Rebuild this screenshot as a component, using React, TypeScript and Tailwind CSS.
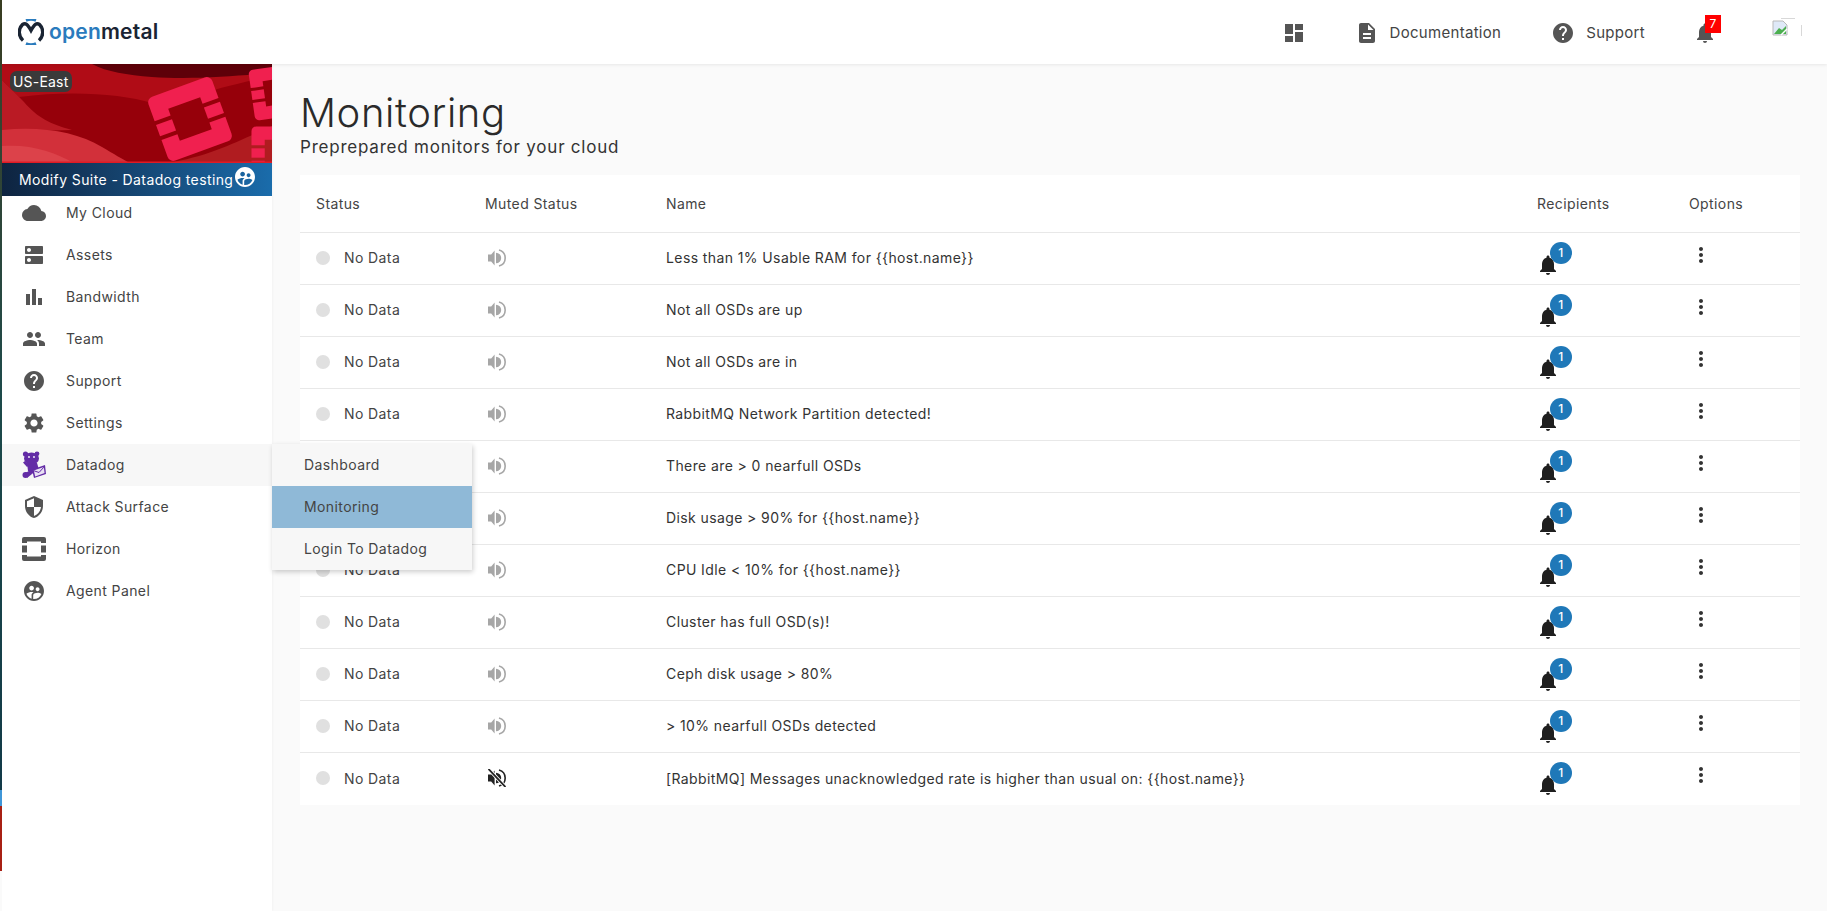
import {
  MdCloud,
  MdDns,
  MdBarChart,
  MdPeople,
  MdHelp,
  MdSettings,
  MdSecurity,
  MdSupervisedUserCircle,
  MdDashboard,
  MdDescription,
  MdNotifications,
  MdMoreVert,
} from 'react-icons/md';

const navItems = [
  { label: 'My Cloud', icon: <MdCloud size={24} /> },
  { label: 'Assets', icon: <MdDns size={24} /> },
  { label: 'Bandwidth', icon: <MdBarChart size={24} /> },
  { label: 'Team', icon: <MdPeople size={24} /> },
  { label: 'Support', icon: <MdHelp size={24} /> },
  { label: 'Settings', icon: <MdSettings size={24} /> },
];

const monitors = [
  'Less than 1% Usable RAM for {{host.name}}',
  'Not all OSDs are up',
  'Not all OSDs are in',
  'RabbitMQ Network Partition detected!',
  'There are > 0 nearfull OSDs',
  'Disk usage > 90% for {{host.name}}',
  'CPU Idle < 10% for {{host.name}}',
  'Cluster has full OSD(s)!',
  'Ceph disk usage > 80%',
  '> 10% nearfull OSDs detected',
  '[RabbitMQ] Messages unacknowledged rate is higher than usual on: {{host.name}}',
];

function OpenStackMark({ fill = '#f0204f' }: { fill?: string }) {
  // outer 68x68 centered on 0,0
  return (
    <g fill={fill}>
      <path d="M-34 -10V-28a6 6 0 0 1 6-6H28a6 6 0 0 1 6 6V-10H17V-17H-17V-10Z" />
      <path d="M-34 10V28a6 6 0 0 0 6 6H28a6 6 0 0 0 6-6V10H17V17H-17V10Z" />
      <rect x="-34" y="-6" width="17" height="12" />
      <rect x="17" y="-6" width="17" height="12" />
    </g>
  );
}

function Banner() {
  return (
    <svg viewBox="0 0 270 99" className="block h-[99px] w-[270px]" preserveAspectRatio="none">
      <rect width="270" height="99" fill="#96000a" />
      <path d="M0 0H270V12C210 24 170 40 150 39C120 30 70 26 17 33C10 26 4 20 0 16Z" fill="#b00c16" />
      <path d="M90 0H270V9C235 12 190 16 150 13C125 11 105 8 90 0Z" fill="#5e0009" />
      <path d="M0 16C8 24 14 30 22 38C36 54 48 60 70 66L0 68Z" fill="#ba1a24" />
      <path d="M0 66C40 62 75 68 100 83C112 90 120 95 128 99H0Z" fill="#d2303a" />
      <path d="M0 82C30 80 52 88 72 99H0Z" fill="#dc424a" />
      <path d="M165 99C210 92 240 75 270 62V99Z" fill="#b01c20" />
      <g transform="translate(188 55) rotate(-20)">
        <OpenStackMark />
      </g>
      <g transform="translate(275 28) rotate(-8) scale(0.75)">
        <OpenStackMark />
      </g>
      <g transform="translate(276 89) scale(0.78)">
        <OpenStackMark />
      </g>
      <rect y="97.5" width="270" height="1.5" fill="#e01b24" />
    </svg>
  );
}

function Logo() {
  return (
    <svg viewBox="0 0 26 26" className="h-[26px] w-[26px]" fill="none">
      <path d="M8 1.5a12.5 12.5 0 0 1 10 0" stroke="#2a7bbd" strokeWidth="2.6" />
      <path d="M8 24.5a12.5 12.5 0 0 0 10 0" stroke="#2a7bbd" strokeWidth="2.6" />
      <path d="M5 21.5A11 11 0 0 1 4.5 5.5C7.5 3.5 9.5 5 13 11.5C16.5 5 18.5 3.5 21.5 5.5A11 11 0 0 1 21 21.5" stroke="#1a2433" strokeWidth="3.4" />
    </svg>
  );
}

function DatadogIcon() {
  return (
    <svg viewBox="0 0 24 28" className="h-[28px] w-[24px]" fill="#632ca6">
      <circle cx="3.5" cy="3" r="2.6" />
      <circle cx="15" cy="2.8" r="2.4" />
      <ellipse cx="9.5" cy="7.5" rx="7.5" ry="6" />
      <path d="M5 12H15L16.5 17L10 23L6 20Z" />
      <path d="M5 16L1 11.5L3 10L7.5 14Z" />
      <circle cx="3.5" cy="24" r="3" />
      <path d="M3 22L9 19L10 23L5 27Z" />
      <path d="M10 18.5L23 14L24 23L12 27Z" />
      <path d="M11.8 19.5L21.8 16L22.6 22L13.2 25.4Z" fill="#e9e0f4" />
      <path d="M12 19.8L17 21.5L21.8 16.2" fill="none" stroke="#632ca6" strokeWidth="1" />
      <circle cx="7" cy="6" r="0.9" fill="#ffffff" />
      <circle cx="12" cy="6" r="0.9" fill="#ffffff" />
    </svg>
  );
}

function HorizonIcon() {
  return (
    <svg viewBox="0 0 24 24" className="h-[24px] w-[24px]" fill="#555555">
      <path d="M0 6V2a2 2 0 0 1 2-2H22a2 2 0 0 1 2 2V6H19V4.5H5V6Z" />
      <path d="M0 18V22a2 2 0 0 0 2 2H22a2 2 0 0 0 2-2V18H19V19.5H5V18Z" />
      <rect x="0" y="8.5" width="5" height="7" />
      <rect x="19" y="8.5" width="5" height="7" />
    </svg>
  );
}

function SpeakerIcon({ muted }: { muted: boolean }) {
  const color = muted ? '#222222' : '#a6a6a6';
  return (
    <svg viewBox="0 0 18 18" className="h-[18px] w-[18px]">
      <path d="M0 5.5H3.2L6.6 1.5V16.5L3.2 12.5H0Z" fill={color} />
      <path d="M8 3.8A5.2 5.2 0 0 1 8 14.2Z" fill={color} />
      <path d="M11 0.9A8.4 8.4 0 0 1 11 17.1" fill="none" stroke={color} strokeWidth="1.6" />
      {muted && <path d="M1 0.5L17 17.5" stroke="#ffffff" strokeWidth="3.4" />}
      {muted && <path d="M0.5 0L17.5 18" stroke={color} strokeWidth="1.8" />}
    </svg>
  );
}

function BrokenImage() {
  return (
    <div className="relative h-[18px] w-[30px]">
      <div className="absolute right-[7px] top-0 h-px w-[14px] bg-[#d8d8d8]" />
      <div className="absolute right-0 top-[7px] h-[11px] w-px bg-[#d8d8d8]" />
      <svg viewBox="0 0 16 16" className="absolute left-0 top-[2px] h-[16px] w-[16px]">
        <path d="M1 1H11L15 5V15H1Z" fill="#dfe9f8" stroke="#b9b9b9" />
        <path d="M2 14L7 8L10 10L14 6V14Z" fill="#4caf50" />
        <path d="M9 15L15 9" stroke="#ffffff" strokeWidth="1.5" />
      </svg>
    </div>
  );
}

export default function App() {
  return (
    <div
      className="flex h-[911px] w-[1827px] overflow-hidden bg-[#fafafa] text-[14px] text-[#444444]"
      style={{ fontFamily: 'Inter, "Noto Sans", sans-serif' }}
    >
      {/* sliver of the window behind */}
      <div className="flex h-[871px] w-[2px] flex-col">
        <div className="h-[790px] bg-gradient-to-b from-[#3a3f22] via-[#1d4a4a] to-[#123a48]" />
        <div className="h-[16px] bg-[#3f96d8]" />
        <div className="flex-1 bg-[#a82014]" />
      </div>

      <div className="flex min-w-0 flex-1 flex-col">
        <header className="relative z-20 flex h-[64px] items-center bg-white pl-[16px] shadow-[0_1px_3px_rgba(0,0,0,0.08)]">
          <Logo />
          <div className="ml-[5px] text-[21px] font-semibold tracking-[0.2px]">
            <span className="text-[#2a7bbd]">open</span>
            <span className="text-[#1a2433]">metal</span>
          </div>
          <div className="ml-auto mr-[25px] mt-[2px] flex items-center text-[#444444]">
            <MdDashboard size={24} className="text-[#555555]" />
            <MdDescription size={24} className="ml-[49px] text-[#555555]" />
            <span className="ml-[11px] text-[15px] tracking-[0.3px]">Documentation</span>
            <MdHelp size={24} className="ml-[50px] text-[#555555]" />
            <span className="ml-[11px] text-[15px] tracking-[0.3px]">Support</span>
            <div className="relative ml-[48px]">
              <MdNotifications size={24} className="text-[#555555]" />
              <span className="absolute left-[12px] top-[-6px] flex h-[18px] w-[16px] items-center justify-center bg-[#ff0000] text-[12px] text-white">
                7
              </span>
            </div>
            <div className="ml-[55px] mt-[-13px]">
              <BrokenImage />
            </div>
          </div>
        </header>

        <div className="flex min-h-0 flex-1">
          <aside className="w-[270px] bg-white shadow-[1px_0_2px_rgba(0,0,0,0.03)]">
            <div className="relative">
              <Banner />
              <span className="absolute left-[8px] top-[7px] rounded-[7px] bg-[#3a3a3a] px-[3px] py-[2px] text-[14px] leading-[17px] tracking-[0.2px] text-white">
                US-East
              </span>
            </div>
            <div className="flex h-[33px] items-center bg-gradient-to-r from-[#0e2440] to-[#1a6cab] pl-[17px] text-white">
              <span className="tracking-[0.4px]">Modify Suite - Datadog testing</span>
              <MdSupervisedUserCircle size={24} className="mt-[-6px]" />
            </div>
            <nav className="mt-[-4px]">
              {navItems.map((item) => (
                <div key={item.label} className="flex h-[42px] items-center">
                  <div className="flex w-[64px] justify-center text-[#555555]">{item.icon}</div>
                  <span className="pb-[1px] tracking-[0.4px]">{item.label}</span>
                </div>
              ))}
              <div className="relative flex h-[42px] items-center bg-[#f7f7f7]">
                <div className="flex w-[64px] justify-center">
                  <DatadogIcon />
                </div>
                <span className="pb-[1px] tracking-[0.4px]">Datadog</span>
                <div className="absolute left-[270px] top-0 z-10 w-[200px] bg-[#f7f7f7] shadow-[1px_2px_5px_rgba(0,0,0,0.2)]">
                  <div className="flex h-[42px] items-center pb-[1px] pl-[32px] tracking-[0.4px]">Dashboard</div>
                  <div className="flex h-[42px] items-center bg-[#8fb9d7] pb-[1px] pl-[32px] tracking-[0.4px]">Monitoring</div>
                  <div className="flex h-[42px] items-center pb-[1px] pl-[32px] tracking-[0.4px]">Login To Datadog</div>
                </div>
              </div>
              <div className="flex h-[42px] items-center">
                <div className="flex w-[64px] justify-center text-[#555555]">
                  <MdSecurity size={24} />
                </div>
                <span className="pb-[1px] tracking-[0.4px]">Attack Surface</span>
              </div>
              <div className="flex h-[42px] items-center">
                <div className="flex w-[64px] justify-center">
                  <HorizonIcon />
                </div>
                <span className="pb-[1px] tracking-[0.4px]">Horizon</span>
              </div>
              <div className="flex h-[42px] items-center">
                <div className="flex w-[64px] justify-center text-[#555555]">
                  <MdSupervisedUserCircle size={24} />
                </div>
                <span className="pb-[1px] tracking-[0.4px]">Agent Panel</span>
              </div>
            </nav>
          </aside>

          <main className="min-w-0 flex-1 pl-[28px] pr-[27px]">
            <h1 className="mt-[25px] text-[40px] font-light leading-[48px] tracking-[0.6px] text-[#2a2a2a]">
              Monitoring
            </h1>
            <p className="text-[17px] leading-[20px] tracking-[0.78px] text-[#333333]">
              Preprepared monitors for your cloud
            </p>
            <div className="mt-[18px] bg-white">
              <div className="grid h-[58px] grid-cols-[185px_181px_871px_152px_1fr] items-center border-b border-[#e8e8e8] tracking-[0.4px]">
                <span className="pl-[16px]">Status</span>
                <span>Muted Status</span>
                <span>Name</span>
                <span>Recipients</span>
                <span>Options</span>
              </div>
              {monitors.map((name, i) => (
                <div
                  key={name}
                  className="grid h-[52px] grid-cols-[185px_181px_871px_152px_1fr] items-center border-b border-[#e8e8e8] pb-[2px] tracking-[0.4px] last:border-b-0"
                >
                  <div className="flex items-center pl-[16px]">
                    <span className="h-[14px] w-[14px] rounded-full bg-[#e0e0e0]" />
                    <span className="ml-[14px]">No Data</span>
                  </div>
                  <div className="pl-[3px]">
                    <SpeakerIcon muted={i === monitors.length - 1} />
                  </div>
                  <span className="text-[#333333]">{name}</span>
                  <div className="relative h-[22px]">
                    <MdNotifications size={24} className="absolute left-[-1px] top-[6px] text-[#1f1f1f]" />
                    <span className="absolute left-[13px] top-[-5px] flex h-[22px] w-[22px] items-center justify-center rounded-full bg-[#1f78b8] text-[12px] font-medium text-white">
                      1
                    </span>
                  </div>
                  <div className="mt-[-6px]">
                    <MdMoreVert size={24} className="text-[#333333]" />
                  </div>
                </div>
              ))}
            </div>
          </main>
        </div>
      </div>
    </div>
  );
}
